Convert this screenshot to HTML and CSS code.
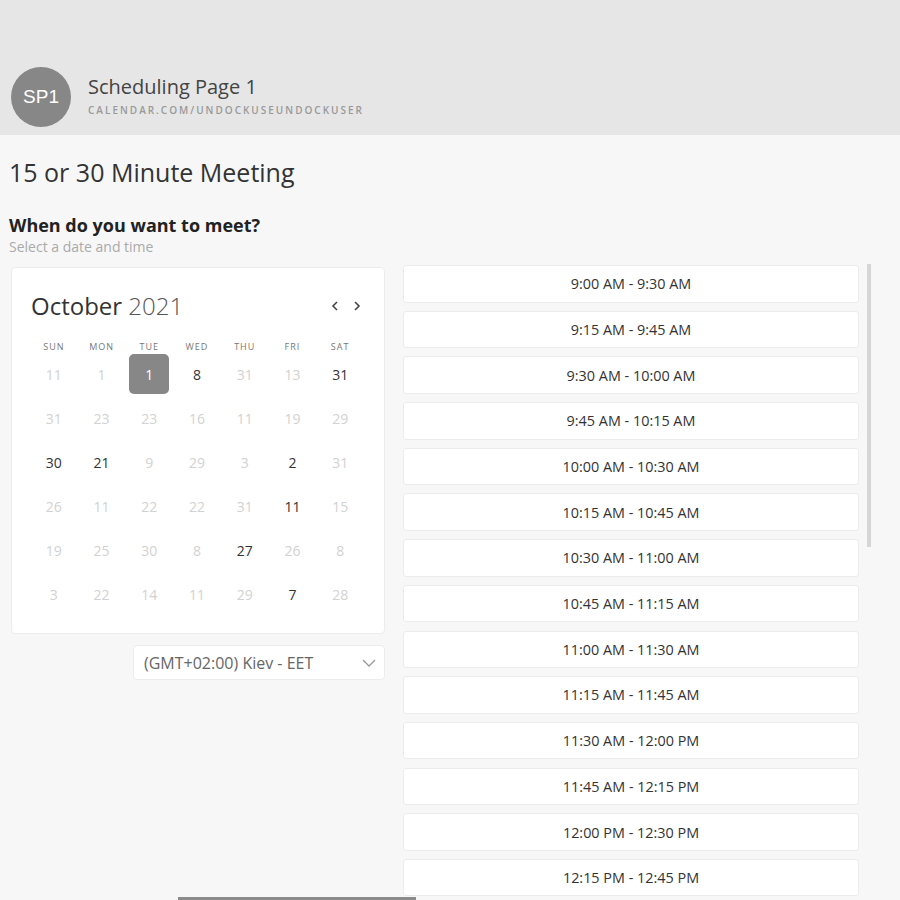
FILE: index.html
```html
<!DOCTYPE html>
<html lang="en">
<head>
<meta charset="utf-8">
<title>Scheduling Page 1</title>
<link rel="stylesheet" href="styles.css">
</head>
<body>
<header class="top">
  <div class="avatar">SP1</div>
  <div class="page-info">
    <div class="page-title">Scheduling Page 1</div>
    <div class="page-url">CALENDAR.COM/UNDOCKUSEUNDOCKUSER</div>
  </div>
</header>
<main class="main">
  <h1 class="meeting">15 or 30 Minute Meeting</h1>
  <h2 class="question">When do you want to meet?</h2>
  <p class="hint">Select a date and time</p>
  <div class="content">
    <div class="left">
      <div class="card">
        <div class="cal-head">
          <div class="month"><span class="m">October</span> <span class="y">2021</span></div>
          <div class="nav">
            <svg width="10" height="12" viewBox="0 0 10 12"><path d="M7 2 L3 6 L7 10" fill="none" stroke="#444" stroke-width="1.6"/></svg>
            <svg width="10" height="12" viewBox="0 0 10 12"><path d="M3 2 L7 6 L3 10" fill="none" stroke="#444" stroke-width="1.6"/></svg>
          </div>
        </div>
        <div class="grid">
          <div class="wd">SUN</div><div class="wd">MON</div><div class="wd">TUE</div><div class="wd">WED</div><div class="wd">THU</div><div class="wd">FRI</div><div class="wd">SAT</div>
        </div>
        <div class="grid days">
          <div class="d off">11</div><div class="d off">1</div><div class="d sel">1</div><div class="d on">8</div><div class="d off">31</div><div class="d off">13</div><div class="d on">31</div>
          <div class="d off">31</div><div class="d off">23</div><div class="d off">23</div><div class="d off">16</div><div class="d off">11</div><div class="d off">19</div><div class="d off">29</div>
          <div class="d on">30</div><div class="d on">21</div><div class="d off">9</div><div class="d off">29</div><div class="d off">3</div><div class="d on">2</div><div class="d off">31</div>
          <div class="d off">26</div><div class="d off">11</div><div class="d off">22</div><div class="d off">22</div><div class="d off">31</div><div class="d on">11</div><div class="d off">15</div>
          <div class="d off">19</div><div class="d off">25</div><div class="d off">30</div><div class="d off">8</div><div class="d on">27</div><div class="d off">26</div><div class="d off">8</div>
          <div class="d off">3</div><div class="d off">22</div><div class="d off">14</div><div class="d off">11</div><div class="d off">29</div><div class="d on">7</div><div class="d off">28</div>
        </div>
      </div>
      <div class="tz">
        <span>(GMT+02:00) Kiev - EET</span>
        <svg width="14" height="8" viewBox="0 0 14 8"><path d="M1 1 L7 7 L13 1" fill="none" stroke="#999" stroke-width="1.3"/></svg>
      </div>
    </div>
    <div class="slots-wrap">
      <div class="slots">
        <div class="slot">9:00 AM - 9:30 AM</div>
        <div class="slot">9:15 AM - 9:45 AM</div>
        <div class="slot">9:30 AM - 10:00 AM</div>
        <div class="slot">9:45 AM - 10:15 AM</div>
        <div class="slot">10:00 AM - 10:30 AM</div>
        <div class="slot">10:15 AM - 10:45 AM</div>
        <div class="slot">10:30 AM - 11:00 AM</div>
        <div class="slot">10:45 AM - 11:15 AM</div>
        <div class="slot">11:00 AM - 11:30 AM</div>
        <div class="slot">11:15 AM - 11:45 AM</div>
        <div class="slot">11:30 AM - 12:00 PM</div>
        <div class="slot">11:45 AM - 12:15 PM</div>
        <div class="slot">12:00 PM - 12:30 PM</div>
        <div class="slot">12:15 PM - 12:45 PM</div>
      </div>
      <div class="vthumb"></div>
    </div>
  </div>
</main>
<div class="hbar"></div>
</body>
</html>
```

FILE: styles.css
```css
html, body {
  margin: 0;
  padding: 0;
}
body {
  background: #f7f7f7;
  font-family: "Open Sans", "Noto Sans", sans-serif;
  height: 900px;
  overflow: hidden;
}
.top {
  height: 135px;
  box-sizing: border-box;
  background: #e6e6e6;
  padding: 67px 0 0 11px;
  display: flex;
  align-items: flex-start;
}
.avatar {
  width: 60px;
  height: 60px;
  border-radius: 50%;
  background: #878787;
  color: #fff;
  font-family: "Liberation Sans", Arial, sans-serif;
  font-size: 19px;
  display: flex;
  align-items: center;
  justify-content: center;
}
.page-info {
  margin-left: 17px;
  margin-top: 7px;
}
.page-title {
  font-size: 20px;
  line-height: 26px;
  color: #444;
}
.page-url {
  margin-top: 3px;
  font-size: 10px;
  line-height: 14px;
  font-weight: 600;
  letter-spacing: 2px;
  color: #999;
}
.main {
  padding-left: 9px;
}
.meeting {
  margin: 21px 0 0;
  font-size: 25px;
  line-height: 32px;
  font-weight: 400;
  color: #333;
}
.question {
  margin: 25px 0 0;
  font-size: 18px;
  line-height: 24px;
  font-weight: 700;
  color: #222;
}
.hint {
  margin: 0;
  font-size: 14px;
  line-height: 20px;
  color: #aaa;
}
.content {
  margin-top: 8px;
  display: flex;
  align-items: flex-start;
}
.left {
  margin-left: 2px;
  width: 374px;
  margin-top: 2px;
}
.card {
  background: #fff;
  border: 1px solid #ececec;
  border-radius: 4px;
  padding: 20px 20px 19px 18px;
}
.cal-head {
  display: flex;
  justify-content: space-between;
  align-items: center;
  height: 36px;
}
.month {
  font-size: 24px;
  line-height: 36px;
  color: #333;
  padding-left: 1px;
}
.month .y {
  font-weight: 300;
  color: #555;
}
.nav {
  display: flex;
  gap: 12px;
  margin-right: 2px;
}
.grid {
  display: grid;
  grid-template-columns: repeat(7, 1fr);
  width: 334px;
}
.wd {
  margin-top: 17px;
  text-align: center;
  font-size: 9px;
  line-height: 12px;
  letter-spacing: 1px;
  color: #777;
}
.days {
  margin-top: 1px;
  row-gap: 4px;
}
.d {
  height: 40px;
  display: flex;
  align-items: center;
  justify-content: center;
  font-size: 14px;
}
.d.off {
  color: #d2d2d2;
}
.d.on {
  color: #333;
}
.d.sel {
  width: 40px;
  justify-self: center;
  background: #878787;
  color: #fff;
  border-radius: 5px;
}
.tz {
  margin: 11px 0 0 122px;
  height: 35px;
  box-sizing: border-box;
  background: #fff;
  border: 1px solid #ececec;
  border-radius: 4px;
  display: flex;
  align-items: center;
  justify-content: space-between;
  padding: 0 8px 0 10px;
  font-size: 16px;
  color: #666;
}
.slots-wrap {
  position: relative;
  margin-left: 18px;
  width: 468px;
  height: 634px;
}
.slots {
  width: 456px;
  display: flex;
  flex-direction: column;
  gap: 8.2px;
}
.slot {
  flex: 0 0 37.5px;
  box-sizing: border-box;
  background: #fff;
  border: 1px solid #ececec;
  border-radius: 3px;
  display: flex;
  align-items: center;
  justify-content: center;
  font-size: 14.4px;
  color: #333;
}
.vthumb {
  position: absolute;
  right: 0;
  top: -1px;
  width: 4px;
  height: 283px;
  background: #d6d6d6;
}
.hbar {
  position: fixed;
  left: 178px;
  bottom: 0;
  width: 238px;
  height: 3px;
  background: #8a8a8a;
}
```
